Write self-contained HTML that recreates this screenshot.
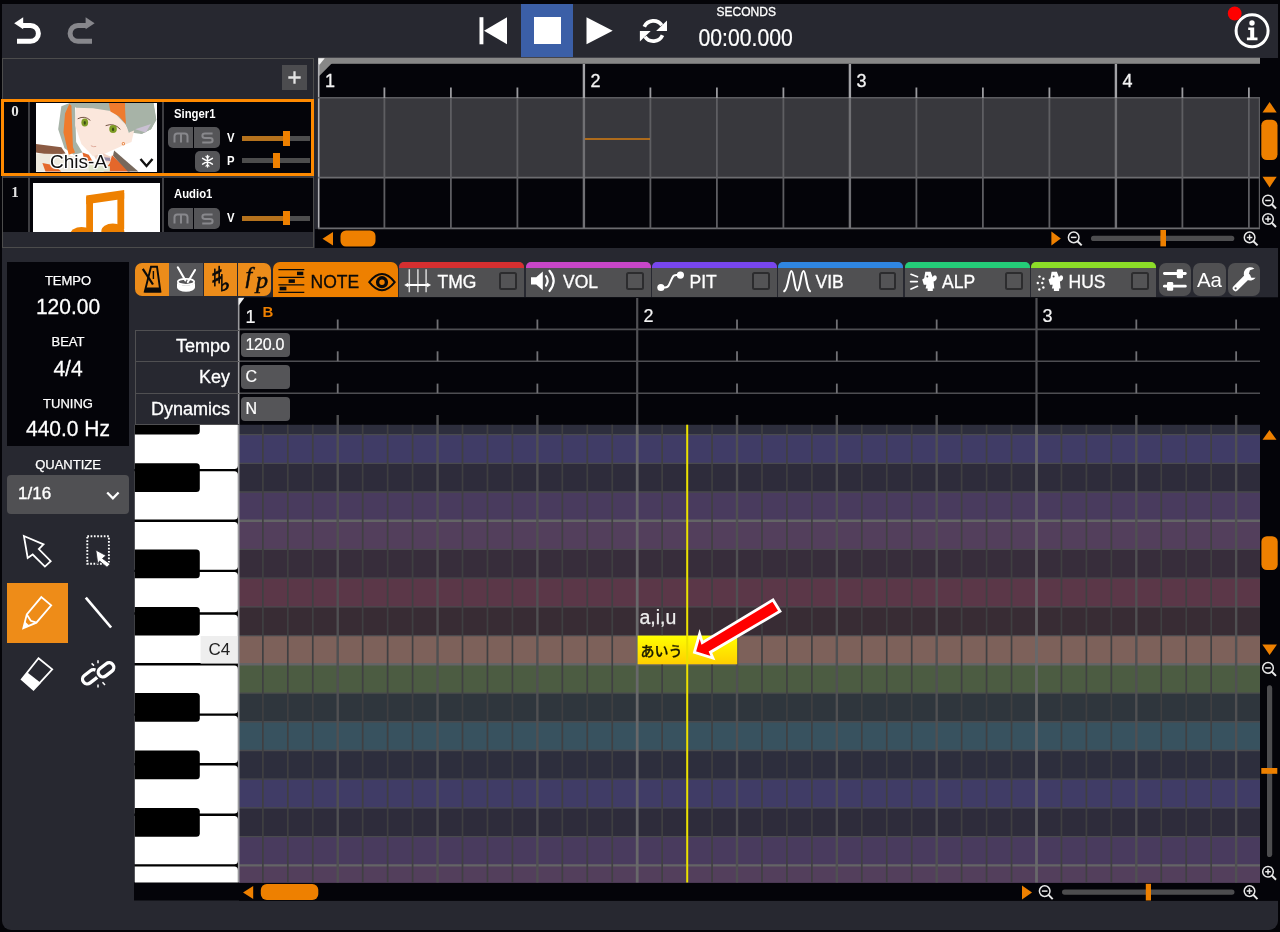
<!DOCTYPE html>
<html lang="ja">
<head>
<meta charset="utf-8">
<title>Vocal Editor</title>
<style>
*{box-sizing:border-box;margin:0;padding:0}
html,body{width:1280px;height:932px;overflow:hidden;background:#040408;font-family:"Liberation Sans","Noto Sans CJK JP",sans-serif;color:#fff}
#app{position:absolute;left:0;top:0;width:1280px;height:932px;overflow:hidden;will-change:transform}
#app div,#app svg,#app span,#app i,#app b{position:absolute}
#panel{left:2px;top:4px;width:1276px;height:926px;background:#272830;border-radius:0 0 9px 9px}
svg{overflow:visible}
.cond{font-family:"Liberation Sans",sans-serif;font-weight:bold;transform:scaleX(.87);transform-origin:0 0;white-space:nowrap}
.bk{background:#040409}
.or{background:#ee8000}
/* top bar */
#stopbtn{left:521px;top:4px;width:52px;height:53px;background:#3b5fa7}
#stopbtn i{left:12.5px;top:13.2px;width:27px;height:27px;background:#fff}
#seclab{left:716.600px;top:5.500px;font-size:12px;line-height:13px;-webkit-text-stroke:0.3px #fff}
#sectime{left:698.500px;top:26.800px;font-size:21.200px;line-height:24px;transform:scaleY(1.12);transform-origin:0 18px;-webkit-text-stroke:0.2px #fff}
/* track list */
#tl{left:2px;top:57.5px;width:312px;height:190px;border:1px solid #4c4c4c;overflow:hidden}
#addbtn{left:279px;top:6px;width:25px;height:25px;background:#4c4c4f}
.vdiv{width:2px;background:#3e3e42}
.tnum{font-family:"Liberation Serif",serif;font-weight:bold;font-size:15px;line-height:18px;width:14px;text-align:center;color:#e4e4e4}
.tname{font-size:13px;line-height:16px;color:#fff}
.vp{font-size:13px;line-height:16px}
.msb{height:21px;background:#555558}
.msg path{fill:none;stroke:#88888c;stroke-width:2}
.strk{width:68px;height:5px}
.sth{width:7px;height:14.5px;background:#ee8000}
.pname{left:14px;top:48.5px;font-size:19px;line-height:20px;color:#111;text-shadow:0 0 2px #fff,0 0 2px #fff,0 0 2px #fff,1px 1px 0 #fff,-1px -1px 0 #fff,1px -1px 0 #fff,-1px 1px 0 #fff}
.rnum{font-size:18px;line-height:20px;color:#f4f4f4;-webkit-text-stroke:0.3px #f4f4f4}
/* editor info */
#info{left:7px;top:262px;width:122px;height:184px;background:#040409;text-align:center}
#info div{left:0;width:122px}
.lab{font-size:13px;line-height:14px;-webkit-text-stroke:0.25px #fff}
.val{font-size:21px;line-height:22px;transform:scaleY(1.07);transform-origin:0 19px;-webkit-text-stroke:0.25px #fff}
#qsel{left:7px;top:474.500px;width:122px;height:39.500px;background:#505053;border-radius:4px}
.tb{top:263px;height:33.300px}
.or2{background:#ec8c1a}
.tabt{top:272.400px;font-size:17.500px;line-height:20px;color:#fff;white-space:nowrap;-webkit-text-stroke:0.3px}
.ptab{top:262.300px;width:125px;height:34.700px;background:#505052;border-radius:5px 5px 0 0;overflow:hidden}
.ptab b{left:0;top:0;width:126px;height:5.500px}
.ptab i{left:100.300px;top:9.500px;width:17.800px;height:17.800px;border:2px solid #2c2c2e;border-radius:2.500px;background:#545456}
.rb{top:262.500px;width:32.500px;height:33.800px;background:#505052;border-radius:7px}
.plab{left:134.500px;width:104px;border:1.500px solid #505052;border-right:none}
.plab span{right:8.500px;top:5px;font-size:18px;line-height:20px;color:#fff;white-space:nowrap;-webkit-text-stroke:0.3px #fff}
.chip{left:240.500px;width:49px;height:23.800px;background:#555558;border-radius:4px;font-size:16px;line-height:24px;padding-left:5px;color:#fff;-webkit-text-stroke:0.2px #fff;letter-spacing:-0.3px}
.rnum2{font-size:18px;line-height:20px;color:#f4f4f4;-webkit-text-stroke:0.2px #f4f4f4}
.mus{font-family:"DejaVu Sans",sans-serif;color:#0a0a0a;-webkit-text-stroke:0.8px #0a0a0a}
.fp{font-family:"Liberation Serif",serif;font-style:italic;color:#0a0a0a;-webkit-text-stroke:0.5px #0a0a0a}

</style>
</head>
<body>
<div id="app">
<div id="panel"></div>

<!-- TOP BAR -->
<svg id="undo" style="left:0;top:0" width="120" height="58">
  <path d="M22 25.5H30.5A7.9 7.9 0 0 1 30.5 41.3H17" fill="none" stroke="#fff" stroke-width="5"/>
  <path d="M14.2 23.2L23.2 17.2V29.2Z" fill="#fff"/>
  <path d="M86.5 25.5H78A7.9 7.9 0 0 0 78 41.3H92" fill="none" stroke="#87878c" stroke-width="5"/>
  <path d="M94.6 23.2L85.6 17.2V29.2Z" fill="#87878c"/>
</svg>
<svg style="left:470px;top:0" width="220" height="58">
  <rect x="9.5" y="17.2" width="3.9" height="27.1" fill="#fff"/>
  <path d="M14 30.8L37 17.2V44.3Z" fill="#fff"/>
  <path d="M116.5 17.2L142.7 30.8L116.5 44.3Z" fill="#fff"/>
  <g fill="none" stroke="#fff" stroke-width="3.7">
    <path d="M174.3 26.8A10.1 10.1 0 0 1 191.8 25.3"/>
    <path d="M192.5 35.2A10.1 10.1 0 0 1 175 36.7"/>
  </g>
  <path d="M197 20.4V31H186.1Z" fill="#fff"/>
  <path d="M169.9 41.5V31H180.7Z" fill="#fff"/>
</svg>
<div id="stopbtn"><i></i></div>
<div id="seclab">SECONDS</div>
<div id="sectime">00:00.000</div>
<svg style="left:1200px;top:0" width="80" height="58">
  <circle cx="34.7" cy="13.5" r="6.9" fill="#ff0000"/>
  <circle cx="52.1" cy="30.8" r="16" fill="none" stroke="#fff" stroke-width="3"/>
  <circle cx="52" cy="23" r="2.7" fill="#fff"/>
  <path d="M48.2 27.6H54.2V37.5H57.5V40.2H46.9V37.5H50.2V30H48.2Z" fill="#fff"/>
</svg>

<!-- TRACK LIST -->
<div id="tl">
  <div id="addbtn"><svg style="left:0;top:0" width="25" height="25"><path d="M12.5 6.3V18.7M6.3 12.5H18.7" stroke="#e4e4e4" stroke-width="2.3" fill="none"/></svg></div>
</div>
<!-- row 0 -->
<div class="trow" style="left:1px;top:99px;width:313px;height:77px;background:#040409;border:3px solid #ff8a00"></div>
<div class="vdiv" style="left:28px;top:102px;height:71px"></div>
<div class="vdiv" style="left:162px;top:102px;height:71px"></div>
<div class="tnum" style="left:8px;top:102px">0</div>
<div id="portrait" style="left:36px;top:103px;width:121px;height:69px;background:#fff;overflow:hidden">
  <svg style="left:0;top:0" width="121" height="69" viewBox="0 0 121 69">
    <rect width="121" height="69" fill="#fff"/>
    <g transform="translate(-6.3 -5.3) scale(0.10549)">
      <path d="M300 80L380 50L1170 50L1200 210L1150 300L1060 345L960 330L900 250L430 90L440 420L500 520L420 540L330 480L270 300Z" fill="#a7b3a7"/>
      <path d="M440 85L770 110L905 250L940 330L990 310L965 420L890 450L700 535L600 555L490 440L430 260Z" fill="#fbe7dc"/>
      <path d="M335 150L375 60L395 75L410 470L430 520L370 540L320 330Z" fill="#ee7b2e"/>
      <path d="M430 50L770 50L765 125L600 100L440 95Z" fill="#a7b3a7"/>
      <path d="M750 50L905 50L915 255L845 175L765 130Z" fill="#ee7b2e"/>
      <path d="M903 50L1175 50L1200 210L1150 300L1060 345L985 300L940 335L912 255Z" fill="#a7b3a7"/>
      <path d="M1000 300L1150 250L1100 330Z" fill="#c9c0d2"/>
      <path d="M455 200Q520 165 575 215" fill="none" stroke="#6b4a3a" stroke-width="9"/>
      <path d="M720 265Q800 235 860 300" fill="none" stroke="#6b4a3a" stroke-width="9"/>
      <ellipse cx="522" cy="235" rx="32" ry="38" fill="#7f9d26"/>
      <ellipse cx="790" cy="297" rx="36" ry="38" fill="#7f9d26"/>
      <ellipse cx="522" cy="238" rx="10" ry="18" fill="#3a4a14"/>
      <ellipse cx="790" cy="300" rx="10" ry="18" fill="#3a4a14"/>
      <path d="M580 455Q605 470 630 462" fill="none" stroke="#d9a090" stroke-width="8"/>
      <circle cx="888" cy="437" r="16" fill="#e98a4a"/><circle cx="888" cy="437" r="7" fill="#fff"/>
      <path d="M610 550L700 530L770 560L760 620L640 610Z" fill="#f0d2c4"/>
      <path d="M60 440L300 470L340 530L200 545L60 520Z" fill="#8b5b43"/>
      <path d="M60 530L340 535L560 600L760 620L760 700L60 700Z" fill="#eeeadf"/>
      <path d="M120 620L230 640L300 700L150 700Z" fill="#e4692c"/>
      <path d="M500 520L560 540L600 610L520 600Z" fill="#e4692c"/>
      <path d="M780 545L950 700L700 700L760 620Z" fill="#e4672b"/>
      <path d="M800 500L1030 700L930 700L790 550Z" fill="#77685c"/>
      <path d="M640 560L760 570L765 600L650 590Z" fill="#9a8fa8"/>
      <path d="M560 640L760 650L760 700L560 700Z" fill="#dfe6cf"/>
    </g>
  </svg>
  <div class="pname">Chis-A</div>
  <svg style="left:103px;top:54px" width="16" height="12"><path d="M1.5 2L7.5 9L13.5 2" fill="none" stroke="#111" stroke-width="2.4"/></svg>
</div>
<div class="cond tname" style="left:174px;top:106px">Singer1</div>
<div class="msb" style="left:168px;top:127px;width:25px;border-radius:5px 0 0 5px"></div>
<div class="msb" style="left:194px;top:127px;width:26px;border-radius:0 5px 5px 0"></div>
<svg class="msg" style="left:168px;top:127px" width="52" height="21"><path d="M6.5 15.6V9.2Q6.5 6.4 9.3 6.4H16.7Q19.5 6.4 19.5 9.2V15.6M13 6.4V15.6"/><path d="M44.6 6.4H37Q34.4 6.4 34.4 8.7Q34.4 11 37 11H42Q44.6 11 44.6 13.3Q44.6 15.6 42 15.6H34.2"/></svg>
<div class="cond vp" style="left:227px;top:130px">V</div>
<div class="strk" style="left:242px;top:135.5px;background:linear-gradient(90deg,#b5721d 0,#b5721d 44px,#4d4d4d 44px)"></div>
<div class="sth" style="left:283px;top:131px"></div>
<div class="msb" style="left:195px;top:150.5px;width:25px;border-radius:5px"></div>
<svg style="left:195px;top:150.5px" width="25" height="21"><g stroke="#fff" stroke-width="1.5" fill="none" stroke-linecap="round"><path d="M12.5 4.6V16M7.6 7.4L17.4 13.2M17.4 7.4L7.6 13.2"/><path d="M10.9 5.4L12.5 6.9L14.1 5.4M10.9 15.2L12.5 13.7L14.1 15.2" stroke-width="1.1"/></g></svg>
<div class="cond vp" style="left:227px;top:153px">P</div>
<div class="strk" style="left:242px;top:158.2px;background:#4d4d4d"></div>
<div class="sth" style="left:272.5px;top:153px"></div>
<!-- row 1 -->
<div style="left:3px;top:176px;width:310px;height:2px;background:#3c3c40"></div>
<div class="bk" style="left:3px;top:178px;width:310px;height:54px"></div>
<div class="vdiv" style="left:28px;top:178px;height:54px"></div>
<div class="vdiv" style="left:162px;top:178px;height:54px"></div>
<div class="tnum" style="left:8px;top:183px">1</div>
<div style="left:33px;top:182.5px;width:127px;height:49.5px;background:#fff;overflow:hidden">
  <svg style="left:0;top:0" width="127" height="50"><g fill="#ee8000"><path d="M53.2 12.5L91.2 7V15.8L53.2 21.3Z"/><rect x="53.2" y="14" width="6.8" height="36"/><rect x="84.4" y="10" width="6.8" height="36"/><ellipse cx="48.5" cy="52" rx="11.5" ry="8"/><ellipse cx="79.8" cy="48.5" rx="11.5" ry="8"/></g></svg>
</div>
<div class="cond tname" style="left:174px;top:186px">Audio1</div>
<div class="msb" style="left:168px;top:207.5px;width:25px;border-radius:5px 0 0 5px"></div>
<div class="msb" style="left:194px;top:207.5px;width:26px;border-radius:0 5px 5px 0"></div>
<svg class="msg" style="left:168px;top:207.5px" width="52" height="21"><path d="M6.5 15.6V9.2Q6.5 6.4 9.3 6.4H16.7Q19.5 6.4 19.5 9.2V15.6M13 6.4V15.6"/><path d="M44.6 6.4H37Q34.4 6.4 34.4 8.7Q34.4 11 37 11H42Q44.6 11 44.6 13.3Q44.6 15.6 42 15.6H34.2"/></svg>
<div class="cond vp" style="left:227px;top:210px">V</div>
<div class="strk" style="left:242px;top:216px;background:linear-gradient(90deg,#b5721d 0,#b5721d 44px,#4d4d4d 44px)"></div>
<div class="sth" style="left:283px;top:210.8px"></div>

<!-- TRACK TIMELINE -->
<div id="tt" class="bk" style="left:317.7px;top:57.5px;width:963px;height:190.5px"></div>
<div class="bk" style="left:314.7px;top:229px;width:10px;height:19px"></div>
<svg style="left:318px;top:58px" width="962" height="190">
  <rect x="0" y="40" width="942" height="79.5" fill="#38383d"/>
  <rect x="0" y="-0.3" width="942" height="6.1" fill="#878787"/>
  <path d="M0 5H14.2L1.5 17.7H0Z" fill="#878787"/>
  <path d="M0.3 0.3H6.7L0.3 8.3Z" fill="#f2f2f2"/>
  <path d="M0.7 6V170.5" stroke="#b0b0b4" stroke-width="1.6"/>
  <path d="M0 39.7H942" stroke="#5c5c60" stroke-width="1.5"/>
  <path d="M0 119.7H942" stroke="#6c6c70" stroke-width="1.8"/>
  <path d="M0 170.4H942" stroke="#6c6c70" stroke-width="1.8"/>
  <path d="M941.4 40V170.5" stroke="#5c5c60" stroke-width="1.2"/>
  <path d="M66.4 40V170.5" stroke="#5e5e62" stroke-width="1.8"/>
  <path d="M66.4 29.5V40" stroke="#9a9a9e" stroke-width="1.8"/>
  <path d="M132.9 40V170.5" stroke="#5e5e62" stroke-width="1.8"/>
  <path d="M132.9 29.5V40" stroke="#9a9a9e" stroke-width="1.8"/>
  <path d="M199.4 40V170.5" stroke="#5e5e62" stroke-width="1.8"/>
  <path d="M199.4 29.5V40" stroke="#9a9a9e" stroke-width="1.8"/>
  <path d="M265.9 6V40" stroke="#a2a2a6" stroke-width="2.4"/>
  <path d="M265.9 40V170.5" stroke="#707074" stroke-width="2.4"/>
  <path d="M332.4 40V170.5" stroke="#5e5e62" stroke-width="1.8"/>
  <path d="M332.4 29.5V40" stroke="#9a9a9e" stroke-width="1.8"/>
  <path d="M398.9 40V170.5" stroke="#5e5e62" stroke-width="1.8"/>
  <path d="M398.9 29.5V40" stroke="#9a9a9e" stroke-width="1.8"/>
  <path d="M465.4 40V170.5" stroke="#5e5e62" stroke-width="1.8"/>
  <path d="M465.4 29.5V40" stroke="#9a9a9e" stroke-width="1.8"/>
  <path d="M531.9 6V40" stroke="#a2a2a6" stroke-width="2.4"/>
  <path d="M531.9 40V170.5" stroke="#707074" stroke-width="2.4"/>
  <path d="M598.4 40V170.5" stroke="#5e5e62" stroke-width="1.8"/>
  <path d="M598.4 29.5V40" stroke="#9a9a9e" stroke-width="1.8"/>
  <path d="M664.9 40V170.5" stroke="#5e5e62" stroke-width="1.8"/>
  <path d="M664.9 29.5V40" stroke="#9a9a9e" stroke-width="1.8"/>
  <path d="M731.4 40V170.5" stroke="#5e5e62" stroke-width="1.8"/>
  <path d="M731.4 29.5V40" stroke="#9a9a9e" stroke-width="1.8"/>
  <path d="M797.9 6V40" stroke="#a2a2a6" stroke-width="2.4"/>
  <path d="M797.9 40V170.5" stroke="#707074" stroke-width="2.4"/>
  <path d="M864.4 40V170.5" stroke="#5e5e62" stroke-width="1.8"/>
  <path d="M864.4 29.5V40" stroke="#9a9a9e" stroke-width="1.8"/>
  <path d="M930.9 40V170.5" stroke="#5e5e62" stroke-width="1.8"/>
  <path d="M930.9 29.5V40" stroke="#9a9a9e" stroke-width="1.8"/>
  <path d="M266.8 81H332" stroke="#d47c12" stroke-width="1.7"/>
  <g fill="#ee8000">
    <path d="M15 174V187.5L4.5 180.75Z"/>
    <rect x="22.5" y="172.5" width="35" height="16" rx="5.5"/>
    <path d="M733.4 173.6V187.5L742.8 180.5Z"/>
    <path d="M951.6 44L944.5 54.4H958.7Z"/>
    <rect x="943.3" y="61.8" width="16.2" height="40.2" rx="5.5"/>
    <path d="M944.5 118.8H958.7L951.6 129.4Z"/>
  </g>
  <rect x="773" y="177.8" width="143.3" height="5.2" rx="2.6" fill="#4d4d4f"/>
  <rect x="842.4" y="172" width="5.6" height="16.4" fill="#ee8000"/>
  <g stroke="#e8e8e8" stroke-width="1.5" fill="none"><circle cx="755.7" cy="179.4" r="5.3"/><path d="M759.5 183.2L763.7 187.4" stroke-width="2"/><path d="M752.9 179.4H758.5"/></g><g stroke="#e8e8e8" stroke-width="1.5" fill="none"><circle cx="931.6" cy="179.4" r="5.3"/><path d="M935.4 183.2L939.6 187.4" stroke-width="2"/><path d="M928.8 179.4H934.4M931.6 176.6V182.2"/></g><g stroke="#e8e8e8" stroke-width="1.5" fill="none"><circle cx="950" cy="142.5" r="5.3"/><path d="M953.8 146.3L958 150.5" stroke-width="2"/><path d="M947.2 142.5H952.8"/></g><g stroke="#e8e8e8" stroke-width="1.5" fill="none"><circle cx="950" cy="161" r="5.3"/><path d="M953.8 164.8L958 169" stroke-width="2"/><path d="M947.2 161H952.8M950 158.2V163.8"/></g>
</svg>
<div class="rnum" style="left:325px;top:70.7px">1</div>
<div class="rnum" style="left:590.5px;top:70.7px">2</div>
<div class="rnum" style="left:856.5px;top:70.7px">3</div>
<div class="rnum" style="left:1122.5px;top:70.7px">4</div>

<!-- EDITOR LEFT INFO -->
<div id="info">
  <div class="lab" style="top:12px">TEMPO</div>
  <div class="val" style="top:34.3px">120.00</div>
  <div class="lab" style="top:73px">BEAT</div>
  <div class="val" style="top:95.7px">4/4</div>
  <div class="lab" style="top:134.5px">TUNING</div>
  <div class="val" style="top:156.4px">440.0 Hz</div>
</div>
<div class="lab" style="left:7px;top:457.5px;width:122px;text-align:center">QUANTIZE</div>
<div id="qsel"><span style="left:11px;top:9.5px;font-size:17px;line-height:20px;-webkit-text-stroke:0.35px #fff">1/16</span>
  <svg style="left:99px;top:16px" width="14" height="10"><path d="M1.2 1.5L6.9 7.3L12.6 1.5" fill="none" stroke="#fff" stroke-width="2.3"/></svg>
</div>
<div style="left:7.4px;top:582.5px;width:60.2px;height:60.3px;background:#ee8c18"></div>
<svg id="tools" style="left:0;top:0" width="135" height="720">
<g fill="none" stroke="#fff" stroke-width="1.8" stroke-linejoin="miter">
  <path d="M23.9 536L43.5 544.3L38.8 549.1L50.7 561.2L44.9 566.6L32.7 554.5L27.7 558Z"/>
  <rect x="87.3" y="536.3" width="21.6" height="27.4" stroke-dasharray="1.7 1.6" stroke-width="1.9"/>
  <path d="M23.3 628.2L26.8 614.4L41.3 597.1L51.2 605.4L36.4 622.7Z"/>
  <path d="M26.8 614.4L30.8 620.8L36.4 622.7"/>
  <path d="M38.5 658.2L52.2 669.3L33.5 689.7L21.7 679.4Z"/>
</g>
<path d="M95.8 550L106 555.6L102.5 558.5L110.2 564L107 567.2L99.6 561L97.8 564Z" fill="#fff" stroke="#272830" stroke-width="0.8"/>
<path d="M23.3 628.2L25 621.5L29.5 625.8Z" fill="#fff"/>
<path d="M85.8 597.7L111.1 627.5" stroke="#fff" stroke-width="2.7"/>
<path d="M27.1 672.3L40.9 683L33.5 689.7L21.7 679.4Z" fill="#fff"/>
<g fill="none">
  <rect x="-8.6" y="-4.7" width="17.2" height="9.4" rx="4.7" transform="translate(90.3 676.8) rotate(-38)" stroke="#fff" stroke-width="3.3"/>
  <rect x="-8.6" y="-4.7" width="17.2" height="9.4" rx="4.7" transform="translate(106 669.8) rotate(-38)" stroke="#272830" stroke-width="6.5"/>
  <rect x="-8.6" y="-4.7" width="17.2" height="9.4" rx="4.7" transform="translate(106 669.8) rotate(-38)" stroke="#fff" stroke-width="3.3"/>
</g>
<g stroke="#fff" stroke-width="1.5">
  <path d="M91.6 663.4L94 665.6M98 660.2V663.3M98 684.6V687.6M102.5 682.2L105 685"/>
</g>

</svg>

<!-- TAB BAR -->
<div class="tb or2" style="left:135px;width:33.5px;border-radius:7px 0 0 7px"></div>
<div class="tb" style="left:169px;width:33.5px;background:#555558"></div>
<div class="tb or2" style="left:203.5px;width:33.5px"></div>
<div class="tb or2" style="left:238px;width:33.3px;border-radius:0 7px 7px 0"></div>
<div style="left:272.7px;top:262.3px;width:125.4px;height:35px;background:#ee8000;border-radius:7px 7px 0 0"></div>
<div class="tabt" style="left:310.5px;color:#0a0a0a">NOTE</div>
<div class="ptab" style="left:399.1px"><b style="background:#d62f30"></b><i></i></div>
<div class="ptab" style="left:525.6px"><b style="background:#c846c8"></b><i></i></div>
<div class="ptab" style="left:652.1px"><b style="background:#7846ee"></b><i></i></div>
<div class="ptab" style="left:778.4px"><b style="background:#2f86e2"></b><i></i></div>
<div class="ptab" style="left:904.7px"><b style="background:#24cc78"></b><i></i></div>
<div class="ptab" style="left:1031px"><b style="background:#8cdc28"></b><i></i></div>
<div class="tabt" style="left:437.5px">TMG</div>
<div class="tabt" style="left:563px">VOL</div>
<div class="tabt" style="left:689.5px">PIT</div>
<div class="tabt" style="left:815.5px">VIB</div>
<div class="tabt" style="left:942px">ALP</div>
<div class="tabt" style="left:1068.5px">HUS</div>
<div class="mus" style="left:210.5px;top:262px;font-size:27px;line-height:30px">♯</div>
<div class="mus" style="left:219.5px;top:270px;font-size:23px;line-height:26px">♭</div>
<div class="fp" style="left:245.5px;top:259.6px;font-size:24px;line-height:30px">f</div>
<div class="fp" style="left:256px;top:265.2px;font-size:24px;line-height:30px">p</div>
<div class="rb" style="left:1158.8px"></div>
<div class="rb" style="left:1193px"></div>
<div class="rb" style="left:1227.5px"></div>
<div style="left:1197px;top:268.6px;font-size:20.5px;line-height:22px;letter-spacing:-0.2px">Aa</div>
<svg id="tabicons" style="left:0;top:0" width="1280" height="300">
<!-- metronome -->
<g stroke="#0a0a0a" stroke-width="1.9" fill="none">
  <path d="M151 266.7H157L160.4 291.6H144.8Z"/>
  <path d="M142.8 268.8L153 284.5" stroke-width="2.2"/>
  <path d="M153.4 271V279" stroke-width="1.4"/>
</g>
<path d="M145.8 287.6H159.8L160.8 292.4H144.3Z" fill="#0a0a0a"/>
<!-- drum -->
<g stroke="#fff" stroke-width="2.1" fill="none" stroke-linecap="round">
  <path d="M177.8 267.3L185.3 280.3M195 270L187.8 282"/>
</g>
<path d="M177 282V287.5A9 4.2 0 0 0 195 287.5V282A9 3.6 0 0 1 177 282Z" fill="#fff"/>
<ellipse cx="186" cy="281.8" rx="8.2" ry="3" fill="none" stroke="#fff" stroke-width="1.7"/>
<!-- piano roll icon -->
<g stroke="#0a0a0a" stroke-width="1.3">
  <path d="M278.4 269.6H304.3M278.4 277.3H304.3M278.4 284.8H304.3M278.4 292.3H304.3"/>
</g>
<g fill="#0a0a0a">
  <rect x="297" y="271.7" width="6.3" height="3.5"/>
  <rect x="288.6" y="279.3" width="6.3" height="3.6"/>
  <rect x="279.6" y="286.7" width="6.8" height="3.7"/>
</g>
<!-- eye -->
<path d="M369.3 282.2Q382 266 394.7 282.2Q382 298.4 369.3 282.2Z" fill="none" stroke="#0a0a0a" stroke-width="2"/>
<circle cx="382" cy="282.2" r="4.4" fill="none" stroke="#0a0a0a" stroke-width="3.4"/>
<!-- TMG -->
<g stroke="#d8d8d8" stroke-width="1.5">
  <path d="M409.3 269.3V292.3M417.9 269.3V292.3M426.1 269.3V292.3"/>
</g>
<path d="M407 285H428.4" stroke="#fff" stroke-width="2"/>
<path d="M404.2 285L408.2 282.8V287.2ZM431.1 285L427.1 282.8V287.2Z" fill="#fff"/>
<!-- VOL -->
<path d="M531 277.3H536.2L542.8 271.4V290.2L536.2 284.4H531Z" fill="#fff"/>
<g stroke="#fff" stroke-width="2.2" fill="none" stroke-linecap="round">
  <path d="M546 276.2Q549.3 280.8 546 285.5"/>
  <path d="M549.5 270.8Q557.8 280.8 549.5 291"/>
</g>
<!-- PIT -->
<circle cx="660.9" cy="287.5" r="3.6" fill="#fff"/>
<circle cx="680.4" cy="275.1" r="3.6" fill="#fff"/>
<path d="M660.9 287.5H665Q667.8 287.5 669 284.8L672.3 277.8Q673.5 275.1 676.3 275.1H680.4" fill="none" stroke="#fff" stroke-width="2"/>
<!-- VIB -->
<path d="M784.2 291.2C788.5 289 788.8 271 791.4 271C794 271 794.4 290.5 797.3 290.5C800.2 290.5 800.9 271 803.5 271C806.1 271 806.2 289 810 291.2" fill="none" stroke="#fff" stroke-width="2.1" stroke-linecap="round"/>
<!-- ALP -->
<g stroke="#fff" stroke-width="1.7" stroke-linecap="round">
  <path d="M911 274.3L917.5 276.8M910.6 281.6H917.2M911 289L917.5 286.3"/>
</g>
<path d="M925.3 271.8H930.6L932.7 277.3Q933.3 275.2 935 275.2Q936.8 275.2 936.8 277.7Q936.8 280.5 933.6 281.5L934.3 288.5H932.8V291H927.6V288.6H925.6L926.4 284.8H923.8L922.2 279.6L924.2 278.2Z" fill="#fff"/>
<circle cx="927.3" cy="276.6" r="1" fill="#505052"/>
<!-- HUS -->
<g fill="#fff">
  <circle cx="1039.5" cy="276.6" r="1.2"/><circle cx="1043.4" cy="278.8" r="1.2"/>
  <circle cx="1037.8" cy="283" r="1.2"/><circle cx="1042.3" cy="283" r="1.2"/>
  <circle cx="1043.4" cy="287.5" r="1.2"/><circle cx="1039.3" cy="289.5" r="1.2"/>
</g>
<path d="M925.3 271.8H930.6L932.7 277.3Q933.3 275.2 935 275.2Q936.8 275.2 936.8 277.7Q936.8 280.5 933.6 281.5L934.3 288.5H932.8V291H927.6V288.6H925.6L926.4 284.8H923.8L922.2 279.6L924.2 278.2Z" fill="#fff" transform="translate(126.3 0)"/>
<circle cx="1053.6" cy="276.6" r="1" fill="#505052"/>
<!-- sliders -->
<g fill="#fff">
  <rect x="1163" y="272" width="23.7" height="2.9" rx="1.4"/>
  <rect x="1176.8" y="269.3" width="6.2" height="8.9" rx="1.3"/>
  <rect x="1163" y="284.7" width="23.7" height="2.9" rx="1.4"/>
  <rect x="1167" y="281.9" width="6.2" height="8.9" rx="1.3"/>
</g>
<!-- wrench -->
<path d="M1235.6 288.3L1247.5 276.4" stroke="#fff" stroke-width="5.8" stroke-linecap="round"/>
<path d="M1253.6 268.1A6.6 6.6 0 1 0 1256.1 277L1252 277.6L1248.8 274.4L1249.4 270.3Z" fill="#fff" transform="rotate(8 1250 274)"/>
<circle cx="1235.6" cy="288.3" r="1.1" fill="#505052"/>

</svg>

<!-- <clipPath id="pc"><rect x="134.5" y="424.8" width="104.5" height="457.8"/></clipPath>
<g clip-path="url(#pc)">
<rect x="134.5" y="424.8" width="104.5" height="457.8" fill="#000"/>
<path d="M134.5 420.83H234.4Q237.9 420.83 237.9 424.33V465.47Q237.9 468.97 234.4 468.97H134.5Z" fill="#fff"/>
<path d="M134.5 471.37H234.4Q237.9 471.37 237.9 474.87V516.02Q237.9 519.52 234.4 519.52H134.5Z" fill="#fff"/>
<path d="M134.5 521.92H234.4Q237.9 521.92 237.9 525.42V566.14Q237.9 569.64 234.4 569.64H134.5Z" fill="#fff"/>
<path d="M134.5 572.04H234.4Q237.9 572.04 237.9 575.54V608.79Q237.9 612.29 234.4 612.29H134.5Z" fill="#fff"/>
<path d="M134.5 614.69H234.4Q237.9 614.69 237.9 618.19V659.62Q237.9 663.12 234.4 663.12H134.5Z" fill="#fff"/>
<path d="M134.5 665.52H234.4Q237.9 665.52 237.9 669.02V709.88Q237.9 713.38 234.4 713.38H134.5Z" fill="#fff"/>
<path d="M134.5 715.78H234.4Q237.9 715.78 237.9 719.28V759.57Q237.9 763.07 234.4 763.07H134.5Z" fill="#fff"/>
<path d="M134.5 765.47H234.4Q237.9 765.47 237.9 768.97V810.11Q237.9 813.61 234.4 813.61H134.5Z" fill="#fff"/>
<path d="M134.5 816.01H234.4Q237.9 816.01 237.9 819.51V860.66Q237.9 864.16 234.4 864.16H134.5Z" fill="#fff"/>
<path d="M134.5 866.56H234.4Q237.9 866.56 237.9 870.06V910.78Q237.9 914.28 234.4 914.28H134.5Z" fill="#fff"/>
<path d="M134.5 807.92H196.3Q199.8 807.92 199.8 811.42V833.14Q199.8 836.64 196.3 836.64H134.5Z" fill="#000"/>
<path d="M134.5 750.48H196.3Q199.8 750.48 199.8 753.98V775.7Q199.8 779.2 196.3 779.2H134.5Z" fill="#000"/>
<path d="M134.5 693.04H196.3Q199.8 693.04 199.8 696.54V718.26Q199.8 721.76 196.3 721.76H134.5Z" fill="#000"/>
<path d="M134.5 606.88H196.3Q199.8 606.88 199.8 610.38V632.1Q199.8 635.6 196.3 635.6H134.5Z" fill="#000"/>
<path d="M134.5 549.44H196.3Q199.8 549.44 199.8 552.94V574.66Q199.8 578.16 196.3 578.16H134.5Z" fill="#000"/>
<path d="M134.5 463.28H196.3Q199.8 463.28 199.8 466.78V488.5Q199.8 492 196.3 492H134.5Z" fill="#000"/>
<path d="M134.5 405.84H196.3Q199.8 405.84 199.8 409.34V431.06Q199.8 434.56 196.3 434.56H134.5Z" fill="#000"/>
<rect x="200.6" y="636" width="37.8" height="27.6" fill="#eeeeee"/>
</g> <rect x="239" y="297.3" width="1041" height="603.5" fill="#040409"/>
<rect x="134" y="882" width="1146" height="18.5" fill="#040409"/>
<rect x="239" y="865.36" width="1021" height="17.54" fill="#533f5c"/>
<rect x="239" y="836.64" width="1021" height="29.02" fill="#493b5e"/>
<rect x="239" y="807.92" width="1021" height="29.02" fill="#2e2c3b"/>
<rect x="239" y="779.2" width="1021" height="29.02" fill="#403c66"/>
<rect x="239" y="750.48" width="1021" height="29.02" fill="#2d2e3d"/>
<rect x="239" y="721.76" width="1021" height="29.02" fill="#38525f"/>
<rect x="239" y="693.04" width="1021" height="29.02" fill="#2f363d"/>
<rect x="239" y="664.32" width="1021" height="29.02" fill="#4c5c42"/>
<rect x="239" y="635.6" width="1021" height="29.02" fill="#7d615a"/>
<rect x="239" y="606.88" width="1021" height="29.02" fill="#382c34"/>
<rect x="239" y="578.16" width="1021" height="29.02" fill="#5b3748"/>
<rect x="239" y="549.44" width="1021" height="29.02" fill="#372d3b"/>
<rect x="239" y="520.72" width="1021" height="29.02" fill="#533f5c"/>
<rect x="239" y="492" width="1021" height="29.02" fill="#493b5e"/>
<rect x="239" y="463.28" width="1021" height="29.02" fill="#2e2c3b"/>
<rect x="239" y="434.56" width="1021" height="29.02" fill="#403c66"/>
<rect x="239" y="424.8" width="1021" height="10.06" fill="#2d2e3d"/>
<path d="M239 865.36H1260" stroke="#646466" stroke-width="2.4"/>
<path d="M239 836.64H1260" stroke="#4a4a4e" stroke-width="1.3"/>
<path d="M239 807.92H1260" stroke="#4a4a4e" stroke-width="1.3"/>
<path d="M239 779.2H1260" stroke="#4a4a4e" stroke-width="1.3"/>
<path d="M239 750.48H1260" stroke="#4a4a4e" stroke-width="1.3"/>
<path d="M239 721.76H1260" stroke="#4a4a4e" stroke-width="1.3"/>
<path d="M239 693.04H1260" stroke="#4a4a4e" stroke-width="1.3"/>
<path d="M239 664.32H1260" stroke="#646466" stroke-width="2.4"/>
<path d="M239 635.6H1260" stroke="#4a4a4e" stroke-width="1.3"/>
<path d="M239 606.88H1260" stroke="#4a4a4e" stroke-width="1.3"/>
<path d="M239 578.16H1260" stroke="#4a4a4e" stroke-width="1.3"/>
<path d="M239 549.44H1260" stroke="#4a4a4e" stroke-width="1.3"/>
<path d="M239 520.72H1260" stroke="#646466" stroke-width="2.4"/>
<path d="M239 492H1260" stroke="#4a4a4e" stroke-width="1.3"/>
<path d="M239 463.28H1260" stroke="#4a4a4e" stroke-width="1.3"/>
<path d="M239 434.56H1260" stroke="#4a4a4e" stroke-width="1.3"/>
<path d="M262.86 424.8V882.6" stroke="#404042" stroke-width="1.7"/>
<path d="M287.81 424.8V882.6" stroke="#404042" stroke-width="1.7"/>
<path d="M312.77 424.8V882.6" stroke="#404042" stroke-width="1.7"/>
<path d="M337.72 415V882.6" stroke="#505052" stroke-width="2.4"/>
<path d="M362.68 424.8V882.6" stroke="#404042" stroke-width="1.7"/>
<path d="M387.64 424.8V882.6" stroke="#404042" stroke-width="1.7"/>
<path d="M412.59 424.8V882.6" stroke="#404042" stroke-width="1.7"/>
<path d="M437.55 415V882.6" stroke="#505052" stroke-width="2.4"/>
<path d="M462.5 424.8V882.6" stroke="#404042" stroke-width="1.7"/>
<path d="M487.46 424.8V882.6" stroke="#404042" stroke-width="1.7"/>
<path d="M512.42 424.8V882.6" stroke="#404042" stroke-width="1.7"/>
<path d="M537.37 415V882.6" stroke="#505052" stroke-width="2.4"/>
<path d="M562.33 424.8V882.6" stroke="#404042" stroke-width="1.7"/>
<path d="M587.28 424.8V882.6" stroke="#404042" stroke-width="1.7"/>
<path d="M612.24 424.8V882.6" stroke="#404042" stroke-width="1.7"/>
<path d="M637.2 298V424.8" stroke="#505054" stroke-width="2.2"/>
<path d="M637.2 424.8V882.6" stroke="#68686a" stroke-width="2.8"/>
<path d="M662.15 424.8V882.6" stroke="#404042" stroke-width="1.7"/>
<path d="M687.11 424.8V882.6" stroke="#404042" stroke-width="1.7"/>
<path d="M712.06 424.8V882.6" stroke="#404042" stroke-width="1.7"/>
<path d="M737.02 415V882.6" stroke="#505052" stroke-width="2.4"/>
<path d="M761.98 424.8V882.6" stroke="#404042" stroke-width="1.7"/>
<path d="M786.93 424.8V882.6" stroke="#404042" stroke-width="1.7"/>
<path d="M811.89 424.8V882.6" stroke="#404042" stroke-width="1.7"/>
<path d="M836.84 415V882.6" stroke="#505052" stroke-width="2.4"/>
<path d="M861.8 424.8V882.6" stroke="#404042" stroke-width="1.7"/>
<path d="M886.76 424.8V882.6" stroke="#404042" stroke-width="1.7"/>
<path d="M911.71 424.8V882.6" stroke="#404042" stroke-width="1.7"/>
<path d="M936.67 415V882.6" stroke="#505052" stroke-width="2.4"/>
<path d="M961.62 424.8V882.6" stroke="#404042" stroke-width="1.7"/>
<path d="M986.58 424.8V882.6" stroke="#404042" stroke-width="1.7"/>
<path d="M1011.54 424.8V882.6" stroke="#404042" stroke-width="1.7"/>
<path d="M1036.49 298V424.8" stroke="#505054" stroke-width="2.2"/>
<path d="M1036.49 424.8V882.6" stroke="#68686a" stroke-width="2.8"/>
<path d="M1061.45 424.8V882.6" stroke="#404042" stroke-width="1.7"/>
<path d="M1086.4 424.8V882.6" stroke="#404042" stroke-width="1.7"/>
<path d="M1111.36 424.8V882.6" stroke="#404042" stroke-width="1.7"/>
<path d="M1136.32 415V882.6" stroke="#505052" stroke-width="2.4"/>
<path d="M1161.27 424.8V882.6" stroke="#404042" stroke-width="1.7"/>
<path d="M1186.23 424.8V882.6" stroke="#404042" stroke-width="1.7"/>
<path d="M1211.18 424.8V882.6" stroke="#404042" stroke-width="1.7"/>
<path d="M1236.14 415V882.6" stroke="#505052" stroke-width="2.4"/>
<path d="M239 329.4H1260" stroke="#4e4e52" stroke-width="1.6"/>
<path d="M239 361.2H1260" stroke="#4e4e52" stroke-width="1.6"/>
<path d="M239 393.2H1260" stroke="#4e4e52" stroke-width="1.6"/>
<path d="M337.72 319.5V329.4" stroke="#707074" stroke-width="1.8"/>
<path d="M337.72 351.3V361.2" stroke="#707074" stroke-width="1.8"/>
<path d="M337.72 383.6V393.2" stroke="#707074" stroke-width="1.8"/>
<path d="M437.55 319.5V329.4" stroke="#707074" stroke-width="1.8"/>
<path d="M437.55 351.3V361.2" stroke="#707074" stroke-width="1.8"/>
<path d="M437.55 383.6V393.2" stroke="#707074" stroke-width="1.8"/>
<path d="M537.37 319.5V329.4" stroke="#707074" stroke-width="1.8"/>
<path d="M537.37 351.3V361.2" stroke="#707074" stroke-width="1.8"/>
<path d="M537.37 383.6V393.2" stroke="#707074" stroke-width="1.8"/>
<path d="M737.02 319.5V329.4" stroke="#707074" stroke-width="1.8"/>
<path d="M737.02 351.3V361.2" stroke="#707074" stroke-width="1.8"/>
<path d="M737.02 383.6V393.2" stroke="#707074" stroke-width="1.8"/>
<path d="M836.84 319.5V329.4" stroke="#707074" stroke-width="1.8"/>
<path d="M836.84 351.3V361.2" stroke="#707074" stroke-width="1.8"/>
<path d="M836.84 383.6V393.2" stroke="#707074" stroke-width="1.8"/>
<path d="M936.67 319.5V329.4" stroke="#707074" stroke-width="1.8"/>
<path d="M936.67 351.3V361.2" stroke="#707074" stroke-width="1.8"/>
<path d="M936.67 383.6V393.2" stroke="#707074" stroke-width="1.8"/>
<path d="M1136.32 319.5V329.4" stroke="#707074" stroke-width="1.8"/>
<path d="M1136.32 351.3V361.2" stroke="#707074" stroke-width="1.8"/>
<path d="M1136.32 383.6V393.2" stroke="#707074" stroke-width="1.8"/>
<path d="M1236.14 319.5V329.4" stroke="#707074" stroke-width="1.8"/>
<path d="M1236.14 351.3V361.2" stroke="#707074" stroke-width="1.8"/>
<path d="M1236.14 383.6V393.2" stroke="#707074" stroke-width="1.8"/> -->
<svg id="roll" style="left:0;top:0" width="1280" height="932">
<rect x="239" y="297.3" width="1041" height="603.5" fill="#040409"/>
<rect x="134" y="882" width="1146" height="18.5" fill="#040409"/>
<rect x="239" y="865.36" width="1021" height="17.54" fill="#533f5c"/>
<rect x="239" y="836.64" width="1021" height="29.02" fill="#493b5e"/>
<rect x="239" y="807.92" width="1021" height="29.02" fill="#2e2c3b"/>
<rect x="239" y="779.2" width="1021" height="29.02" fill="#403c66"/>
<rect x="239" y="750.48" width="1021" height="29.02" fill="#2d2e3d"/>
<rect x="239" y="721.76" width="1021" height="29.02" fill="#38525f"/>
<rect x="239" y="693.04" width="1021" height="29.02" fill="#2f363d"/>
<rect x="239" y="664.32" width="1021" height="29.02" fill="#4c5c42"/>
<rect x="239" y="635.6" width="1021" height="29.02" fill="#7d615a"/>
<rect x="239" y="606.88" width="1021" height="29.02" fill="#382c34"/>
<rect x="239" y="578.16" width="1021" height="29.02" fill="#5b3748"/>
<rect x="239" y="549.44" width="1021" height="29.02" fill="#372d3b"/>
<rect x="239" y="520.72" width="1021" height="29.02" fill="#533f5c"/>
<rect x="239" y="492" width="1021" height="29.02" fill="#493b5e"/>
<rect x="239" y="463.28" width="1021" height="29.02" fill="#2e2c3b"/>
<rect x="239" y="434.56" width="1021" height="29.02" fill="#403c66"/>
<rect x="239" y="424.8" width="1021" height="10.06" fill="#2d2e3d"/>
<path d="M239 865.36H1260" stroke="#646466" stroke-width="2.4"/>
<path d="M239 836.64H1260" stroke="#4a4a4e" stroke-width="1.3"/>
<path d="M239 807.92H1260" stroke="#4a4a4e" stroke-width="1.3"/>
<path d="M239 779.2H1260" stroke="#4a4a4e" stroke-width="1.3"/>
<path d="M239 750.48H1260" stroke="#4a4a4e" stroke-width="1.3"/>
<path d="M239 721.76H1260" stroke="#4a4a4e" stroke-width="1.3"/>
<path d="M239 693.04H1260" stroke="#4a4a4e" stroke-width="1.3"/>
<path d="M239 664.32H1260" stroke="#646466" stroke-width="2.4"/>
<path d="M239 635.6H1260" stroke="#4a4a4e" stroke-width="1.3"/>
<path d="M239 606.88H1260" stroke="#4a4a4e" stroke-width="1.3"/>
<path d="M239 578.16H1260" stroke="#4a4a4e" stroke-width="1.3"/>
<path d="M239 549.44H1260" stroke="#4a4a4e" stroke-width="1.3"/>
<path d="M239 520.72H1260" stroke="#646466" stroke-width="2.4"/>
<path d="M239 492H1260" stroke="#4a4a4e" stroke-width="1.3"/>
<path d="M239 463.28H1260" stroke="#4a4a4e" stroke-width="1.3"/>
<path d="M239 434.56H1260" stroke="#4a4a4e" stroke-width="1.3"/>
<path d="M262.86 424.8V882.6" stroke="#404042" stroke-width="1.7"/>
<path d="M287.81 424.8V882.6" stroke="#404042" stroke-width="1.7"/>
<path d="M312.77 424.8V882.6" stroke="#404042" stroke-width="1.7"/>
<path d="M337.72 415V882.6" stroke="#505052" stroke-width="2.4"/>
<path d="M362.68 424.8V882.6" stroke="#404042" stroke-width="1.7"/>
<path d="M387.64 424.8V882.6" stroke="#404042" stroke-width="1.7"/>
<path d="M412.59 424.8V882.6" stroke="#404042" stroke-width="1.7"/>
<path d="M437.55 415V882.6" stroke="#505052" stroke-width="2.4"/>
<path d="M462.5 424.8V882.6" stroke="#404042" stroke-width="1.7"/>
<path d="M487.46 424.8V882.6" stroke="#404042" stroke-width="1.7"/>
<path d="M512.42 424.8V882.6" stroke="#404042" stroke-width="1.7"/>
<path d="M537.37 415V882.6" stroke="#505052" stroke-width="2.4"/>
<path d="M562.33 424.8V882.6" stroke="#404042" stroke-width="1.7"/>
<path d="M587.28 424.8V882.6" stroke="#404042" stroke-width="1.7"/>
<path d="M612.24 424.8V882.6" stroke="#404042" stroke-width="1.7"/>
<path d="M637.2 298V424.8" stroke="#505054" stroke-width="2.2"/>
<path d="M637.2 424.8V882.6" stroke="#68686a" stroke-width="2.8"/>
<path d="M662.15 424.8V882.6" stroke="#404042" stroke-width="1.7"/>
<path d="M687.11 424.8V882.6" stroke="#404042" stroke-width="1.7"/>
<path d="M712.06 424.8V882.6" stroke="#404042" stroke-width="1.7"/>
<path d="M737.02 415V882.6" stroke="#505052" stroke-width="2.4"/>
<path d="M761.98 424.8V882.6" stroke="#404042" stroke-width="1.7"/>
<path d="M786.93 424.8V882.6" stroke="#404042" stroke-width="1.7"/>
<path d="M811.89 424.8V882.6" stroke="#404042" stroke-width="1.7"/>
<path d="M836.84 415V882.6" stroke="#505052" stroke-width="2.4"/>
<path d="M861.8 424.8V882.6" stroke="#404042" stroke-width="1.7"/>
<path d="M886.76 424.8V882.6" stroke="#404042" stroke-width="1.7"/>
<path d="M911.71 424.8V882.6" stroke="#404042" stroke-width="1.7"/>
<path d="M936.67 415V882.6" stroke="#505052" stroke-width="2.4"/>
<path d="M961.62 424.8V882.6" stroke="#404042" stroke-width="1.7"/>
<path d="M986.58 424.8V882.6" stroke="#404042" stroke-width="1.7"/>
<path d="M1011.54 424.8V882.6" stroke="#404042" stroke-width="1.7"/>
<path d="M1036.49 298V424.8" stroke="#505054" stroke-width="2.2"/>
<path d="M1036.49 424.8V882.6" stroke="#68686a" stroke-width="2.8"/>
<path d="M1061.45 424.8V882.6" stroke="#404042" stroke-width="1.7"/>
<path d="M1086.4 424.8V882.6" stroke="#404042" stroke-width="1.7"/>
<path d="M1111.36 424.8V882.6" stroke="#404042" stroke-width="1.7"/>
<path d="M1136.32 415V882.6" stroke="#505052" stroke-width="2.4"/>
<path d="M1161.27 424.8V882.6" stroke="#404042" stroke-width="1.7"/>
<path d="M1186.23 424.8V882.6" stroke="#404042" stroke-width="1.7"/>
<path d="M1211.18 424.8V882.6" stroke="#404042" stroke-width="1.7"/>
<path d="M1236.14 415V882.6" stroke="#505052" stroke-width="2.4"/>
<path d="M239 329.4H1260" stroke="#4e4e52" stroke-width="1.6"/>
<path d="M239 361.2H1260" stroke="#4e4e52" stroke-width="1.6"/>
<path d="M239 393.2H1260" stroke="#4e4e52" stroke-width="1.6"/>
<path d="M337.72 319.5V329.4" stroke="#707074" stroke-width="1.8"/>
<path d="M337.72 351.3V361.2" stroke="#707074" stroke-width="1.8"/>
<path d="M337.72 383.6V393.2" stroke="#707074" stroke-width="1.8"/>
<path d="M437.55 319.5V329.4" stroke="#707074" stroke-width="1.8"/>
<path d="M437.55 351.3V361.2" stroke="#707074" stroke-width="1.8"/>
<path d="M437.55 383.6V393.2" stroke="#707074" stroke-width="1.8"/>
<path d="M537.37 319.5V329.4" stroke="#707074" stroke-width="1.8"/>
<path d="M537.37 351.3V361.2" stroke="#707074" stroke-width="1.8"/>
<path d="M537.37 383.6V393.2" stroke="#707074" stroke-width="1.8"/>
<path d="M737.02 319.5V329.4" stroke="#707074" stroke-width="1.8"/>
<path d="M737.02 351.3V361.2" stroke="#707074" stroke-width="1.8"/>
<path d="M737.02 383.6V393.2" stroke="#707074" stroke-width="1.8"/>
<path d="M836.84 319.5V329.4" stroke="#707074" stroke-width="1.8"/>
<path d="M836.84 351.3V361.2" stroke="#707074" stroke-width="1.8"/>
<path d="M836.84 383.6V393.2" stroke="#707074" stroke-width="1.8"/>
<path d="M936.67 319.5V329.4" stroke="#707074" stroke-width="1.8"/>
<path d="M936.67 351.3V361.2" stroke="#707074" stroke-width="1.8"/>
<path d="M936.67 383.6V393.2" stroke="#707074" stroke-width="1.8"/>
<path d="M1136.32 319.5V329.4" stroke="#707074" stroke-width="1.8"/>
<path d="M1136.32 351.3V361.2" stroke="#707074" stroke-width="1.8"/>
<path d="M1136.32 383.6V393.2" stroke="#707074" stroke-width="1.8"/>
<path d="M1236.14 319.5V329.4" stroke="#707074" stroke-width="1.8"/>
<path d="M1236.14 351.3V361.2" stroke="#707074" stroke-width="1.8"/>
<path d="M1236.14 383.6V393.2" stroke="#707074" stroke-width="1.8"/>
<clipPath id="pc"><rect x="134.5" y="424.8" width="104.5" height="457.8"/></clipPath>
<g clip-path="url(#pc)">
<rect x="134.5" y="424.8" width="104.5" height="457.8" fill="#000"/>
<path d="M134.5 420.83H234.4Q237.9 420.83 237.9 424.33V465.47Q237.9 468.97 234.4 468.97H134.5Z" fill="#fff"/>
<path d="M134.5 471.37H234.4Q237.9 471.37 237.9 474.87V516.02Q237.9 519.52 234.4 519.52H134.5Z" fill="#fff"/>
<path d="M134.5 521.92H234.4Q237.9 521.92 237.9 525.42V566.14Q237.9 569.64 234.4 569.64H134.5Z" fill="#fff"/>
<path d="M134.5 572.04H234.4Q237.9 572.04 237.9 575.54V608.79Q237.9 612.29 234.4 612.29H134.5Z" fill="#fff"/>
<path d="M134.5 614.69H234.4Q237.9 614.69 237.9 618.19V659.62Q237.9 663.12 234.4 663.12H134.5Z" fill="#fff"/>
<path d="M134.5 665.52H234.4Q237.9 665.52 237.9 669.02V709.88Q237.9 713.38 234.4 713.38H134.5Z" fill="#fff"/>
<path d="M134.5 715.78H234.4Q237.9 715.78 237.9 719.28V759.57Q237.9 763.07 234.4 763.07H134.5Z" fill="#fff"/>
<path d="M134.5 765.47H234.4Q237.9 765.47 237.9 768.97V810.11Q237.9 813.61 234.4 813.61H134.5Z" fill="#fff"/>
<path d="M134.5 816.01H234.4Q237.9 816.01 237.9 819.51V860.66Q237.9 864.16 234.4 864.16H134.5Z" fill="#fff"/>
<path d="M134.5 866.56H234.4Q237.9 866.56 237.9 870.06V910.78Q237.9 914.28 234.4 914.28H134.5Z" fill="#fff"/>
<path d="M134.5 807.92H196.3Q199.8 807.92 199.8 811.42V833.14Q199.8 836.64 196.3 836.64H134.5Z" fill="#000"/>
<path d="M134.5 750.48H196.3Q199.8 750.48 199.8 753.98V775.7Q199.8 779.2 196.3 779.2H134.5Z" fill="#000"/>
<path d="M134.5 693.04H196.3Q199.8 693.04 199.8 696.54V718.26Q199.8 721.76 196.3 721.76H134.5Z" fill="#000"/>
<path d="M134.5 606.88H196.3Q199.8 606.88 199.8 610.38V632.1Q199.8 635.6 196.3 635.6H134.5Z" fill="#000"/>
<path d="M134.5 549.44H196.3Q199.8 549.44 199.8 552.94V574.66Q199.8 578.16 196.3 578.16H134.5Z" fill="#000"/>
<path d="M134.5 463.28H196.3Q199.8 463.28 199.8 466.78V488.5Q199.8 492 196.3 492H134.5Z" fill="#000"/>
<path d="M134.5 405.84H196.3Q199.8 405.84 199.8 409.34V431.06Q199.8 434.56 196.3 434.56H134.5Z" fill="#000"/>
<rect x="200.6" y="636" width="37.8" height="27.6" fill="#eeeeee"/>
</g>
<path d="M238.7 298V882.6" stroke="#9a9a9e" stroke-width="1.6"/>
<path d="M238.7 297.8H244.4L238.7 305.6Z" fill="#f0f0f0"/>
<defs><linearGradient id="ng" x1="0" y1="0" x2="0" y2="1"><stop offset="0" stop-color="#ffff00"/><stop offset="1" stop-color="#ffcf00"/></linearGradient></defs>
<rect x="637.6" y="635.6" width="99.6" height="28.7" fill="url(#ng)"/>
<path d="M687.2 424.8V882.6" stroke="#ece200" stroke-width="2"/>
<path d="M694.4 652.3L699.6 634L702.3 642.7L773 599.9L780 611.2L710.4 652.2L712.9 658Z" fill="#ff0000" stroke="#fff" stroke-width="2.8" stroke-linejoin="miter"/>
<g fill="#ee8000">
  <path d="M253.2 886V899L243 892.5Z"/>
  <rect x="260.8" y="884" width="57.5" height="16" rx="6"/>
  <path d="M1022 885.4V899.5L1032 892.4Z"/>
  <path d="M1269.5 430L1262.5 439.7H1276.5Z"/>
  <rect x="1261.4" y="536.2" width="16.3" height="33.8" rx="5.5"/>
  <path d="M1262.3 644.5H1277L1269.6 655Z"/>
</g>
<rect x="1062" y="889.5" width="172.5" height="5.2" rx="2.6" fill="#4d4d4f"/>
<rect x="1145.8" y="883.8" width="5.2" height="16.7" fill="#ee8000"/>
<rect x="1267" y="685.3" width="5.2" height="171.7" rx="2.6" fill="#4d4d4f"/>
<rect x="1261.3" y="768" width="16" height="5.8" fill="#ee8000"/>
<g stroke="#e8e8e8" stroke-width="1.5" fill="none"><circle cx="1044.7" cy="891.1" r="5.3"/><path d="M1048.5 894.9L1052.7 899.1" stroke-width="2"/><path d="M1041.9 891.1H1047.5"/></g><g stroke="#e8e8e8" stroke-width="1.5" fill="none"><circle cx="1249.5" cy="891.1" r="5.3"/><path d="M1253.3 894.9L1257.5 899.1" stroke-width="2"/><path d="M1246.7 891.1H1252.3M1249.5 888.3V893.9"/></g><g stroke="#e8e8e8" stroke-width="1.5" fill="none"><circle cx="1268" cy="667.9" r="5.3"/><path d="M1271.8 671.7L1276 675.9" stroke-width="2"/><path d="M1265.2 667.9H1270.8"/></g><g stroke="#e8e8e8" stroke-width="1.5" fill="none"><circle cx="1268" cy="871.7" r="5.3"/><path d="M1271.8 875.5L1276 879.7" stroke-width="2"/><path d="M1265.2 871.7H1270.8M1268 868.9V874.5"/></g>
</svg>
<div class="plab" style="top:329.5px;height:32px"><span>Tempo</span></div>
<div class="plab" style="top:361px;height:32.5px"><span>Key</span></div>
<div class="plab" style="top:393px;height:31.5px"><span>Dynamics</span></div>
<div class="chip" style="top:333px">120.0</div>
<div class="chip" style="top:365px">C</div>
<div class="chip" style="top:397px">N</div>
<div class="rnum2" style="left:245.5px;top:307px">1</div>
<div class="rnum2" style="left:643.5px;top:306px">2</div>
<div class="rnum2" style="left:1042.5px;top:306px">3</div>
<div style="left:262.5px;top:303px;font-size:15px;line-height:18px;font-weight:bold;color:#ee8000">B</div>
<div style="left:208.5px;top:640px;font-size:17px;line-height:20px;color:#222">C4</div>
<div style="left:639.5px;top:606px;font-size:19.5px;line-height:22px;color:#ececec;-webkit-text-stroke:0.25px #ececec">a,i,u</div>
<div style="left:640.5px;top:640.5px;font-size:14px;line-height:20px;color:#1a1a00;font-weight:500;-webkit-text-stroke:0.3px #1a1a00;font-family:'Liberation Sans','Noto Sans CJK JP',sans-serif">あいう</div>

</div>
</body>
</html>
